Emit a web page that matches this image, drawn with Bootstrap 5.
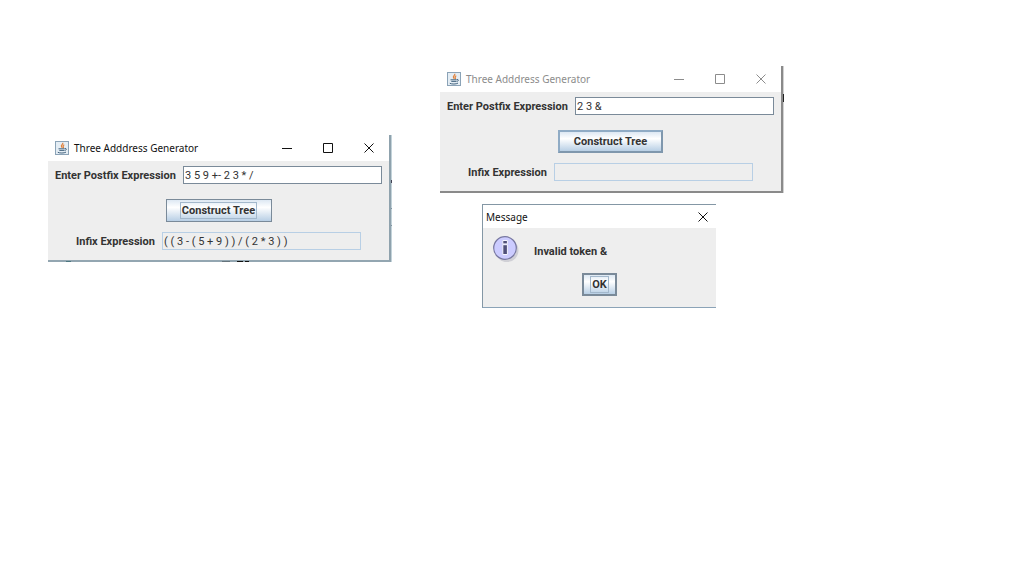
<!DOCTYPE html>
<html lang="en">
<head>
<meta charset="utf-8">
<meta name="viewport" content="width=device-width, initial-scale=1">
<title>Three Adddress Generator</title>
<link href="https://cdn.jsdelivr.net/npm/bootstrap@5.3.0/dist/css/bootstrap.min.css" rel="stylesheet">
<style>
  body { font: 11px/16px Roboto, "Liberation Sans", sans-serif; color: #333; }
  .desktop { min-height: 100vh; }
  /* windows placed freely on the desktop */
  .win { position: absolute; background: #eee; }
  .win-form { width: 343px; border-right: 2px solid #8fa2ad; border-bottom: 2px solid #93a6b1; }
  .win-inactive { border-color: #8a8a8a; }
  .win-solved { left: 48px; top: 135px; }
  .win-error { left: 440px; top: 66px; }
  .win-message { left: 482px; top: 204px; width: 234px; border: 1px solid #8497a5; border-right: 0; border-bottom-color: #8ba3b7; }
  /* slivers of the desktop behind, along the window edges */
  .win-solved::after, .win-error::after { content: ""; position: absolute; top: 0; bottom: -2px; right: -3px; width: 1px; }
  .win-solved::after { background: linear-gradient(#445 0 0) 0 45px/1px 3px no-repeat, linear-gradient(#7f939f 0 0) 0 73px/1px 1px no-repeat, linear-gradient(#7f939f 0 0) 0 90px/1px 1px no-repeat, #c3d3da; }
  .win-error::after { background: linear-gradient(#222 0 0) 0 28px/1px 8px no-repeat, #d2d2d2; }
  .win-solved::before { content: ""; position: absolute; left: 0; right: 0; bottom: -2px; height: 1px; background: linear-gradient(#4c7780 0 0) 18px 0/5px 1px no-repeat, linear-gradient(#66747c 0 0) 174px 0/8px 1px no-repeat, linear-gradient(#111 0 0) 189px 0/6px 1px no-repeat, linear-gradient(#111 0 0) 197px 0/4px 1px no-repeat; }
  .titlebar { height: 26px; padding-left: 7px; background: #fff; color: #111; font: 10px/16px "Noto Sans", "Open Sans", sans-serif; }
  .win-message .titlebar { height: 23px; padding-left: 3px; }
  .win-inactive .titlebar { color: #8c8c8c; }
  .titlebar h1 { font: inherit; margin: 0 0 0 5px; }
  .win-message h1 { margin-left: 0; }
  .winbtn { width: 41px; height: 24px; padding: 0; border: 0; background: none; color: inherit; }
  .win-message .winbtn { width: 26px; }
  .panel { padding: 5px 0 10px; }
  .panel .metal { margin: 15px 0 10px; width: 106px; }
  .win label, .win-message p, .metal { font-weight: bold; }
  .win label { padding-top: 2px; }
  .label-postfix { width: 124px; }
  .label-infix { width: 82px; }
  .field { width: 199px; height: 18px; padding: 1px 1px 0; border: 1px solid #7a8a99; border-radius: 0; background: #fff; color: #333; line-height: 15px; }
  .field[readonly] { background: #eee; border-color: #b8cfe5; }
  .metal { height: 23px; padding: 0; border: 1px solid #7a8a99; background: linear-gradient(#dde8f3, #fff 35%, #b8cfe5); color: #333; line-height: 14px; }
  .metal span { padding: 1px 1px 0; border: 1px solid transparent; }
  .metal.focused span { border-color: #a3b8cc; }
  .panel .metal.hovered { width: 105px; border: 2px solid #7f97ad; border-left-color: #8fabc5; border-top-color: #8fabc5; }
  .metal.ok { width: 35px; border-width: 2px; margin: 9px auto 11px; }
  .message-body { padding: 8px 10px 0; }
  .message-text { margin: 8px 0 0 15px; line-height: 16px; }
</style>
</head>
<body class="bg-white">
<svg class="d-none" aria-hidden="true">
  <symbol id="java" viewBox="0 0 14 14">
    <rect x=".5" y=".5" width="13" height="13" fill="#e4edf4" stroke="#8ba3b7"/>
    <path d="M7.7 1.7c1 1.6-2.3 2.3-1.2 3.8.3.5.7.8.4 1.5M9.3 3.7c-1.7.8-1.4 1.5-.9 2.1.3.5 0 .9-.5 1.2" fill="none" stroke="#e0813b" stroke-width="1.2"/>
    <path d="M3.5 7.8h6.3M4.3 9.4h4.9M10 7.5c2-.3 1.8 1.6-.4 2M2.8 11.3c2 1 6.3 1 8.2-.2" fill="none" stroke="#456580"/>
  </symbol>
  <symbol id="min" viewBox="0 0 10 10"><path d="M0 5.5h10" stroke="currentColor"/></symbol>
  <symbol id="max" viewBox="0 0 10 10"><path d="M.5.5h9v9h-9z" fill="none" stroke="currentColor"/></symbol>
  <symbol id="close" viewBox="0 0 10 10"><path d="M.5.5l9 9M9.5.5l-9 9" stroke="currentColor"/></symbol>
</svg>

<main class="desktop position-relative">
  <section class="win win-form win-solved">
    <header class="titlebar d-flex align-items-center">
      <svg class="flex-shrink-0" width="14" height="14" aria-hidden="true"><use href="#java"/></svg>
      <h1 class="flex-grow-1">Three Adddress Generator</h1>
      <button class="winbtn d-flex align-items-center justify-content-center" aria-label="Minimize"><svg width="10" height="10"><use href="#min"/></svg></button>
      <button class="winbtn d-flex align-items-center justify-content-center" aria-label="Maximize"><svg width="10" height="10"><use href="#max"/></svg></button>
      <button class="winbtn d-flex align-items-center justify-content-center" aria-label="Close"><svg width="10" height="10"><use href="#close"/></svg></button>
    </header>
    <form class="panel d-flex flex-column align-items-center" onsubmit="return false">
      <div class="d-flex align-items-center gap-1"><label class="label-postfix text-nowrap" for="postfix1">Enter Postfix Expression</label><input id="postfix1" class="field" value="3 5 9 +- 2 3 * /"></div>
      <button class="metal focused d-flex align-items-center justify-content-center"><span>Construct Tree</span></button>
      <div class="d-flex align-items-center gap-1"><label class="label-infix text-nowrap" for="infix1">Infix Expression</label><input id="infix1" class="field" readonly value="( ( 3 - ( 5 + 9 ) ) / ( 2 * 3 ) )"></div>
    </form>
  </section>

  <section class="win win-form win-error win-inactive">
    <header class="titlebar d-flex align-items-center">
      <svg class="flex-shrink-0" width="14" height="14" aria-hidden="true"><use href="#java"/></svg>
      <h1 class="flex-grow-1">Three Adddress Generator</h1>
      <button class="winbtn d-flex align-items-center justify-content-center" aria-label="Minimize"><svg width="10" height="10"><use href="#min"/></svg></button>
      <button class="winbtn d-flex align-items-center justify-content-center" aria-label="Maximize"><svg width="10" height="10"><use href="#max"/></svg></button>
      <button class="winbtn d-flex align-items-center justify-content-center" aria-label="Close"><svg width="10" height="10"><use href="#close"/></svg></button>
    </header>
    <form class="panel d-flex flex-column align-items-center" onsubmit="return false">
      <div class="d-flex align-items-center gap-1"><label class="label-postfix text-nowrap" for="postfix2">Enter Postfix Expression</label><input id="postfix2" class="field" value="2 3 &amp;"></div>
      <button class="metal hovered d-flex align-items-center justify-content-center"><span>Construct Tree</span></button>
      <div class="d-flex align-items-center gap-1"><label class="label-infix text-nowrap" for="infix2">Infix Expression</label><input id="infix2" class="field" readonly></div>
    </form>
  </section>

  <section class="win win-message" role="dialog" aria-labelledby="msg-title">
    <header class="titlebar d-flex align-items-center">
      <h1 id="msg-title" class="flex-grow-1">Message</h1>
      <button class="winbtn d-flex align-items-center justify-content-center" aria-label="Close"><svg width="10" height="10"><use href="#close"/></svg></button>
    </header>
    <div class="message-body d-flex align-items-start">
      <svg class="flex-shrink-0" width="26" height="28" viewBox="0 0 26 28" aria-hidden="true">
        <circle cx="14" cy="14.5" r="11.5" fill="#d0d0d6"/>
        <circle cx="12" cy="12" r="11.3" fill="#ccccff" stroke="#7777a0" stroke-width="1.2"/>
        <path d="M9.8 4.5h4.6v3.4H9.8zM9.8 8.7h4.6v9.8H9.8z" fill="#50507a" stroke="#f4f4ff"/>
      </svg>
      <p class="message-text">Invalid token &amp;</p>
    </div>
    <button class="metal ok focused d-flex align-items-center justify-content-center"><span>OK</span></button>
  </section>
</main>
<script src="https://cdn.jsdelivr.net/npm/bootstrap@5.3.0/dist/js/bootstrap.bundle.min.js"></script>
</body>
</html>
